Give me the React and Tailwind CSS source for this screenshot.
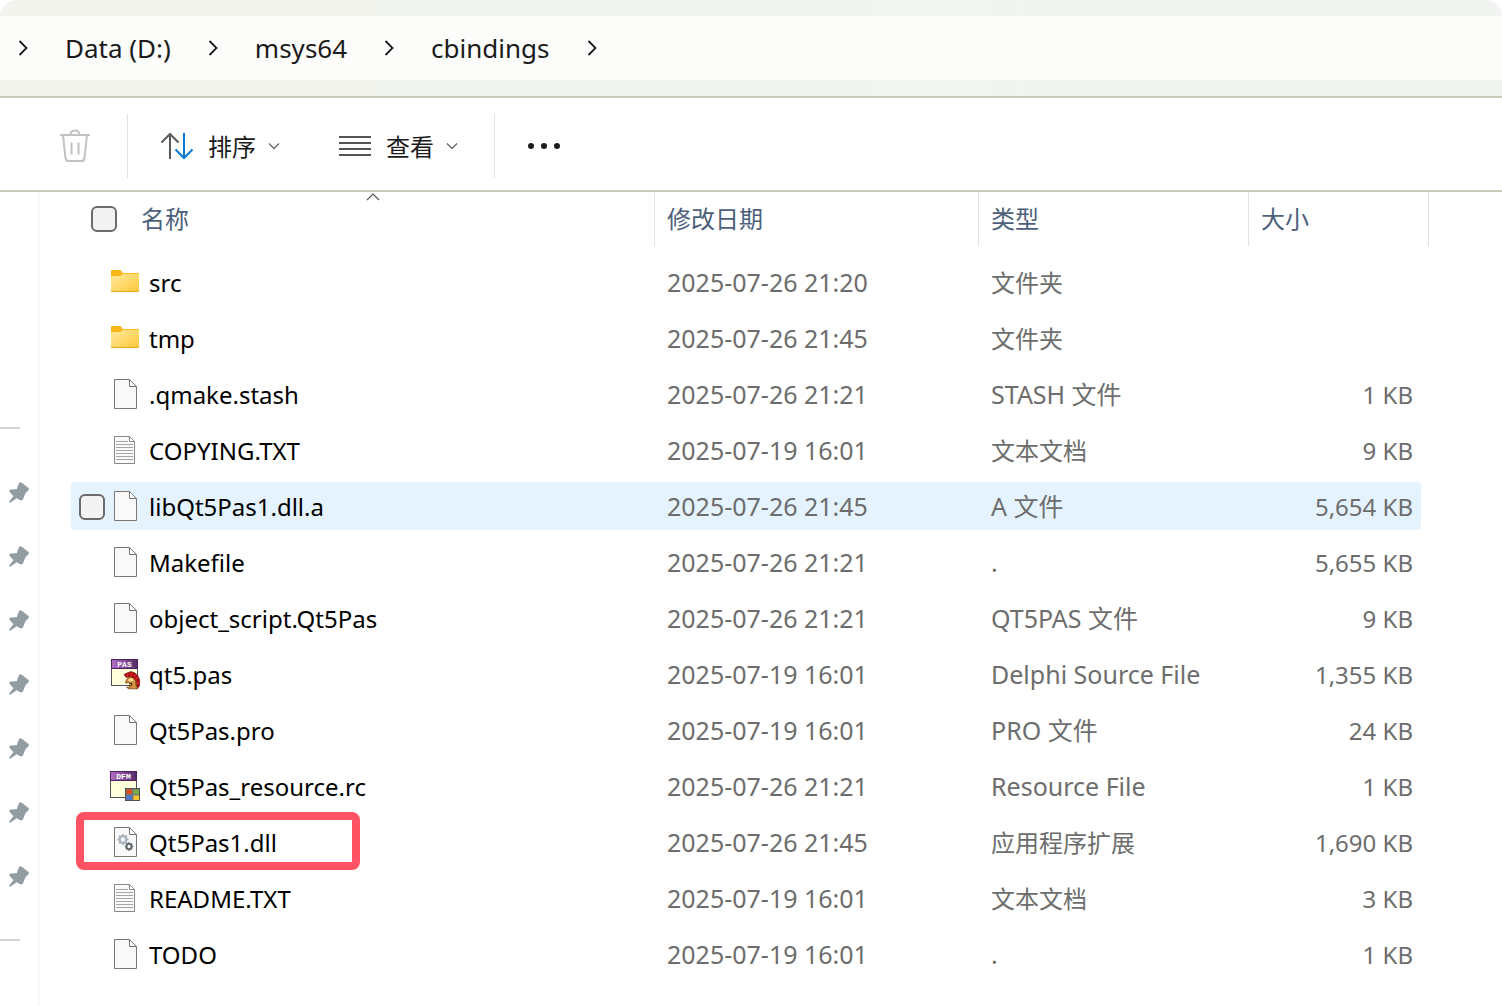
import { Fragment } from 'react'

const crumbs = ['Data (D:)', 'msys64', 'cbindings']

const files = [
  { name: 'src', icon: 'folder', date: '2025-07-26 21:20', type: '文件夹', size: '' },
  { name: 'tmp', icon: 'folder', date: '2025-07-26 21:45', type: '文件夹', size: '' },
  { name: '.qmake.stash', icon: 'blank', date: '2025-07-26 21:21', type: 'STASH 文件', size: '1 KB' },
  { name: 'COPYING.TXT', icon: 'text', date: '2025-07-19 16:01', type: '文本文档', size: '9 KB' },
  { name: 'libQt5Pas1.dll.a', icon: 'blank', date: '2025-07-26 21:45', type: 'A 文件', size: '5,654 KB', hovered: true },
  { name: 'Makefile', icon: 'blank', date: '2025-07-26 21:21', type: '.', size: '5,655 KB' },
  { name: 'object_script.Qt5Pas', icon: 'blank', date: '2025-07-26 21:21', type: 'QT5PAS 文件', size: '9 KB' },
  { name: 'qt5.pas', icon: 'pas', date: '2025-07-19 16:01', type: 'Delphi Source File', size: '1,355 KB' },
  { name: 'Qt5Pas.pro', icon: 'blank', date: '2025-07-19 16:01', type: 'PRO 文件', size: '24 KB' },
  { name: 'Qt5Pas_resource.rc', icon: 'dfm', date: '2025-07-26 21:21', type: 'Resource File', size: '1 KB' },
  { name: 'Qt5Pas1.dll', icon: 'dll', date: '2025-07-26 21:45', type: '应用程序扩展', size: '1,690 KB', marked: true },
  { name: 'README.TXT', icon: 'text', date: '2025-07-19 16:01', type: '文本文档', size: '3 KB' },
  { name: 'TODO', icon: 'blank', date: '2025-07-19 16:01', type: '.', size: '1 KB' },
]

const pins = ['pin-1', 'pin-2', 'pin-3', 'pin-4', 'pin-5', 'pin-6', 'pin-7']

function FolderIcon() {
  return (
    <svg width="32" height="32" viewBox="0 0 32 32">
      <defs>
        <linearGradient id="folder" x1="0" y1="0" x2="1" y2="1">
          <stop offset="0" stopColor="#ffe9a2" />
          <stop offset="1" stopColor="#ffc938" />
        </linearGradient>
      </defs>
      <path d="M2 5a1 1 0 0 1 1-1h8.500l2.500 3H29a1 1 0 0 1 1 1v8H2z" fill="#f9b915" />
      <path d="M2 11q0-1 1-1h8.500L14 8h15q1 0 1 1v15.500q0 1-1 1H3q-1 0-1-1z" fill="url(#folder)" />
      <path d="M2 24.500q0 1 1 1h26q1 0 1-1" fill="none" stroke="#eba61c" />
    </svg>
  )
}

function Sheet() {
  return (
    <>
      <path d="M5.500 1.500h15l7 7v22h-22z" fill="#f9f9f9" stroke="#7a7774" />
      <path d="M20.500 1.500v7h7z" fill="#fff" stroke="#7a7774" />
    </>
  )
}

function BlankIcon() {
  return (
    <svg width="32" height="32" viewBox="0 0 32 32">
      <Sheet />
    </svg>
  )
}

function TextIcon() {
  return (
    <svg width="32" height="32" viewBox="0 0 32 32">
      <path d="M5.500 2.500h15l5 5v22h-20z" fill="#fafafa" stroke="#8b8987" />
      <path d="M20.500 2.500v5h5z" fill="#fff" stroke="#8b8987" />
      <path
        d="M7 7.500h12M7 10.500h17M7 13.500h17M7 16.500h17M7 19.500h17M7 22.500h17M7 25.500h17"
        stroke="#a3a5a7"
      />
    </svg>
  )
}

function Gear({ x, y, r, color }) {
  return (
    <g transform={`translate(${x} ${y})`} fill="none" stroke={color}>
      <circle r={r * 0.6} strokeWidth={r * 0.42} />
      {[0, 45, 90, 135].map((angle) => (
        <path
          key={angle}
          d={`M0 ${-r}V${-r * 0.7}M0 ${r * 0.7}V${r}`}
          strokeWidth={r * 0.36}
          transform={`rotate(${angle})`}
        />
      ))}
    </g>
  )
}

function DllIcon() {
  return (
    <svg width="32" height="32" viewBox="0 0 32 32">
      <Sheet />
      <Gear x={14} y={13.5} r={5.5} color="#a9b4bd" />
      <Gear x={20} y={20.5} r={4.2} color="#59646c" />
    </svg>
  )
}

function SourceSheet({ label }) {
  return (
    <>
      <defs>
        <linearGradient id="purple" x1="0" y1="0" x2="1" y2="0">
          <stop offset="0" stopColor="#b46fc6" />
          <stop offset="1" stopColor="#542b66" />
        </linearGradient>
      </defs>
      <rect x="2.500" y="1.500" width="26" height="26" fill="#ffffdc" stroke="#55505c" />
      <rect x="2.500" y="1.500" width="26" height="9" fill="url(#purple)" stroke="#4b2160" />
      <text
        x="15.500"
        y="9"
        fontSize="8"
        fontWeight="bold"
        fontFamily="'Liberation Mono', monospace"
        fill="#fff"
        textAnchor="middle"
      >
        {label}
      </text>
    </>
  )
}

function PasIcon() {
  return (
    <svg width="32" height="32" viewBox="0 0 32 32">
      <SourceSheet label="PAS" />
      <path
        d="M15 16.500l3-1.500 4-1.500 4 1.500 3 3 1.700 4-.200 6-2 2.500-1.500-7-5-4.500-5 .300z"
        fill="#b50d12"
        stroke="#6a070a"
        strokeWidth="0.600"
      />
      <path d="M18 16.500l1 2M22 15v2.500M26 16.500l-1 2M28.500 20l-2 1M29 24.500l-1.500.5" stroke="#e5464a" strokeWidth="0.800" />
      <path
        d="M17 23q1-3.700 4.500-4 3.500.500 5 3.500l.500 5 2 3.300h-9l-2.500-1.500 3-.300.500-3-1.500-1.500-3 .500z"
        fill="#d59442"
        stroke="#74420d"
        strokeWidth="0.800"
      />
      <path d="M19 22.500q1.500-3 4.500-2l1 2.500-3 .500z" fill="#ffdf94" />
      <path d="M20 25.500l3-.500-1 3.500" fill="none" stroke="#4f2b0a" />
    </svg>
  )
}

function DfmIcon() {
  return (
    <svg width="32" height="32" viewBox="0 0 32 32">
      <g transform="translate(-1 0)">
        <SourceSheet label="DFM" />
      </g>
      <rect x="16.500" y="18.500" width="14" height="12" fill="#77787c" stroke="#505057" />
      <path d="M17.500 19.500h5.500v4.500h-5.500z" fill="#df4b1d" />
      <path d="M24.500 19.500H30v4.500h-5.500z" fill="#74ae43" />
      <path d="M17.500 25.500h5.500V30h-5.500z" fill="#5278ca" />
      <path d="M24.500 25.500H30V30h-5.500z" fill="#f4c52f" />
    </svg>
  )
}

const icons = {
  folder: FolderIcon,
  blank: BlankIcon,
  text: TextIcon,
  pas: PasIcon,
  dfm: DfmIcon,
  dll: DllIcon,
}

function CrumbArrow() {
  return (
    <svg width="16" height="16" viewBox="0 0 16 16" className="shrink-0">
      <path d="M4.500 1l7 7-7 7" fill="none" stroke="#1b1b1b" strokeWidth="1.800" />
    </svg>
  )
}

function DownArrow() {
  return (
    <svg width="12" height="12" viewBox="0 0 12 12">
      <path d="M1 3.500l5 5 5-5" fill="none" stroke="#666" strokeWidth="1.300" />
    </svg>
  )
}

function PinIcon() {
  return (
    <svg width="22" height="22" viewBox="0 0 22 22">
      <path
        d="M11 2.200q1.200-1.600 2.800-.500l6.700 5.300q1.200 1.200-.200 2.500L17.500 12 15 18.300q-.800 1.600-2.300 1.200L8.500 17.200l-5.800 4.200q-1.900.600-1.500-1.200L5.500 15.300 1.500 10.800q-.800-1.800.900-2.300l6.300-.300z"
        fill="#919ca3"
      />
    </svg>
  )
}

function Breadcrumb() {
  return (
    <header className="rounded-t-2xl border-b-2 border-[#c5cdbb] bg-linear-to-r from-[#f2f5ed] to-[#f2f4f1] py-4">
      <nav className="flex h-16 items-center gap-[34px] bg-[#fcfcfa] pl-[15px] text-[26px] text-[#1b1b1b]">
        <CrumbArrow />
        {crumbs.map((crumb) => (
          <Fragment key={crumb}>
            <a href="#" className="whitespace-nowrap">{crumb}</a>
            <CrumbArrow />
          </Fragment>
        ))}
      </nav>
    </header>
  )
}

function Toolbar() {
  return (
    <div className="flex h-[94px] items-center border-b-2 border-[#c5cdbb] pt-1 text-2xl text-[#1b1b1b]">
      <button type="button" aria-label="删除" disabled className="ml-[59px]">
        <svg width="32" height="34" viewBox="0 0 32 34" fill="none" stroke="#c2c2c2" strokeWidth="2">
          <path d="M1 6h30M11.500 6q0-4.500 4.500-4.500T20.500 6M4 6l2.500 23q.400 3 3 3h13q2.600 0 3-3L28 6M12.500 13.500v12M19.500 13.500v12" />
        </svg>
      </button>
      <div className="ml-9 h-16 w-px bg-[#e4e4e4]" />
      <button type="button" className="ml-8 flex items-center gap-3.5">
        <svg width="34" height="28" viewBox="0 0 34 28" fill="none" strokeWidth="2">
          <path d="M10 27V2M1.500 10.500L10 2l8.500 8.500" stroke="#5a5a5a" />
          <path d="M24 1v25M15.500 17.500L24 26l8.500-8.500" stroke="#0a78d4" />
        </svg>
        <span className="flex items-center gap-3">
          <span className="pt-0.5">排序</span>
          <DownArrow />
        </span>
      </button>
      <button type="button" className="ml-[58px] flex items-center gap-3.5">
        <svg width="34" height="22" viewBox="0 0 34 22" stroke="#555" strokeWidth="2">
          <path d="M1 2h32M1 8h32M1 14h32M1 20h32" />
        </svg>
        <span className="flex items-center gap-3">
          <span className="pt-0.5">查看</span>
          <DownArrow />
        </span>
      </button>
      <div className="ml-9 h-16 w-px bg-[#e4e4e4]" />
      <button type="button" aria-label="更多" className="ml-8">
        <svg width="34" height="8" viewBox="0 0 34 8" fill="#1b1b1b">
          <circle cx="4" cy="4" r="3" />
          <circle cx="17" cy="4" r="3" />
          <circle cx="30" cy="4" r="3" />
        </svg>
      </button>
    </div>
  )
}

function Sidebar() {
  return (
    <aside className="w-10 shrink-0 border-r-2 border-[#f7f7f7] pt-[235px]">
      <hr className="mb-[31px] w-5 border-t-2 border-[#d4d4d4]" />
      {pins.map((pin) => (
        <div key={pin} className="flex h-16 items-center pl-2">
          <PinIcon />
        </div>
      ))}
      <hr className="mt-[31px] w-5 border-t-2 border-[#d4d4d4]" />
    </aside>
  )
}

function CheckBox({ label }) {
  return (
    <input
      type="checkbox"
      aria-label={label}
      className="size-[26px] shrink-0 appearance-none rounded-md border-2 border-[#6b6b6b] bg-[#f3f3f3]"
    />
  )
}

function FileRow({ file }) {
  const Icon = icons[file.icon]
  const fill = file.hovered ? 'bg-[#e5f3ff]' : ''
  // Chinese glyphs look larger than Latin ones at the same size
  const typeSize = /[A-Z.]/.test(file.type) ? 'text-[25px]' : 'text-2xl'

  return (
    <tr className="h-14">
      <td className="relative p-0">
        <div className={`flex h-12 items-center rounded-l-sm pl-2 text-2xl text-black ${fill}`}>
          <div className="flex w-[30px] shrink-0 pt-0.5">
            {file.hovered && <CheckBox label={file.name} />}
          </div>
          <Icon />
          <span className="pt-0.5 pl-2 whitespace-nowrap">{file.name}</span>
        </div>
        {file.marked && (
          <div className="absolute -top-0.5 left-[5px] h-[58px] w-[284px] rounded-lg border-8 border-[#ff5262]" />
        )}
      </td>
      <td className="p-0">
        <div className={`flex h-12 items-center pt-0.5 pl-3 text-[25px] whitespace-nowrap ${fill}`}>{file.date}</div>
      </td>
      <td className="p-0">
        <div className={`flex h-12 items-center pt-0.5 pl-3 whitespace-nowrap ${typeSize} ${fill}`}>{file.type}</div>
      </td>
      <td className="p-0">
        <div className={`mr-2 flex h-12 items-center justify-end rounded-r-sm pt-0.5 pr-2 text-2xl whitespace-nowrap ${fill}`}>
          {file.size}
        </div>
      </td>
    </tr>
  )
}

function FileTable() {
  return (
    <table className="mr-[73px] ml-[31px] grow table-fixed border-collapse self-start text-[#6d6d6d]">
      <colgroup>
        <col />
        <col className="w-[324px]" />
        <col className="w-[270px]" />
        <col className="w-[180px]" />
      </colgroup>
      <thead className="text-2xl text-[#4c607a]">
        <tr>
          <th className="relative p-0 font-normal">
            <div className="flex h-[54px] items-center gap-6 border-r border-[#e2e2e2] pl-5">
              <CheckBox label="全选" />
              名称
            </div>
            <div className="absolute inset-x-0 top-0 flex justify-center pl-5">
              <svg width="14" height="9" viewBox="0 0 14 9">
                <path d="M1 8l6-6 6 6" fill="none" stroke="#555" strokeWidth="1.200" />
              </svg>
            </div>
          </th>
          {['修改日期', '类型', '大小'].map((title) => (
            <th key={title} className="p-0 font-normal">
              <div className="flex h-[54px] items-center border-r border-[#e2e2e2] pl-3">{title}</div>
            </th>
          ))}
        </tr>
      </thead>
      <tbody className="before:block before:h-2">
        {files.map((file) => (
          <FileRow key={file.name} file={file} />
        ))}
      </tbody>
    </table>
  )
}

export default function App() {
  return (
    <div className="flex min-h-screen flex-col bg-white font-['Noto_Sans','Noto_Sans_CJK_SC',sans-serif]">
      <Breadcrumb />
      <Toolbar />
      <main className="flex grow">
        <Sidebar />
        <FileTable />
      </main>
    </div>
  )
}
